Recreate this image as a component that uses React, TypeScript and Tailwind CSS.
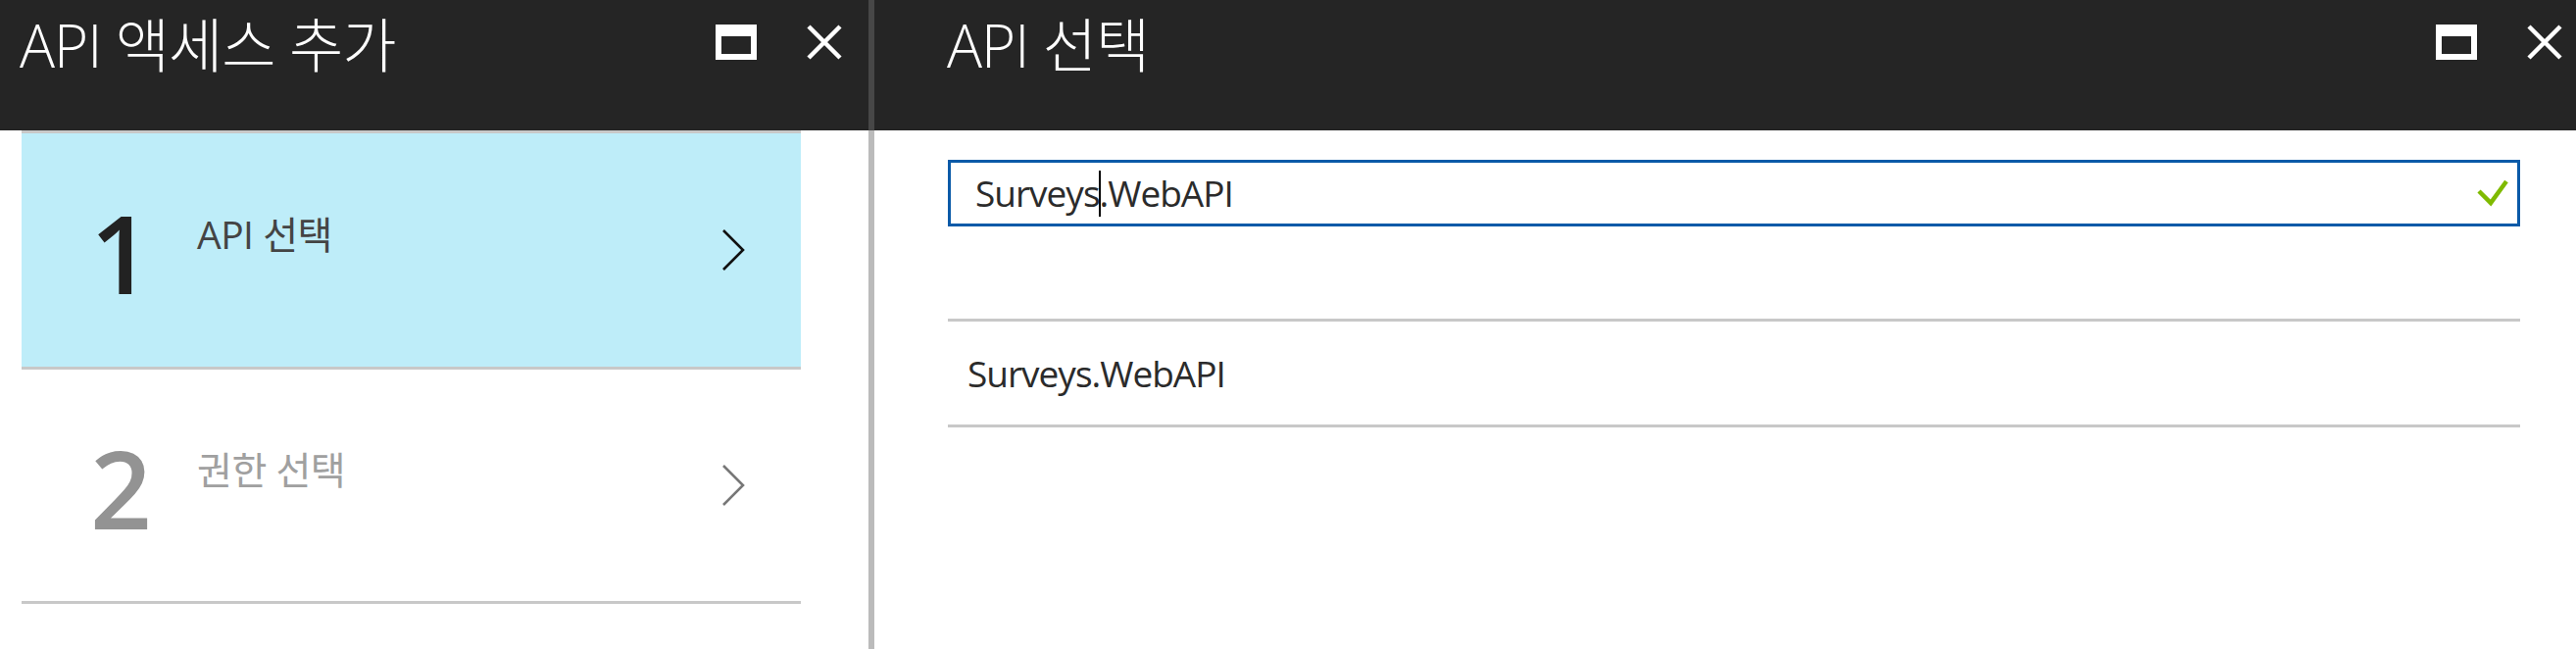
import React from "react"

const font = { fontFamily: '"Open Sans", "Noto Sans CJK KR", sans-serif' }

function MaxIcon() {
  return (
    <svg width="42" height="36" viewBox="0 0 42 36">
      <rect x="0" y="0" width="42" height="36" fill="#ffffff" />
      <rect x="6" y="12" width="30" height="18" fill="#252525" />
    </svg>
  )
}

function CloseIcon() {
  return (
    <svg width="36" height="36" viewBox="0 0 36 36">
      <path d="M2 2 L34 34 M34 2 L2 34" stroke="#ffffff" strokeWidth="4.5" />
    </svg>
  )
}

function Chevron({ color }: { color: string }) {
  return (
    <svg width="24" height="44" viewBox="0 0 24 44">
      <polyline points="2,2 22,22 2,42" fill="none" stroke={color} strokeWidth="2.6" />
    </svg>
  )
}

function Header({ title, right }: { title: string; right: string }) {
  return (
    <div className={`h-[133px] bg-[#252525] flex items-start justify-between ${right}`}>
      <h1 className="text-[60px] leading-[68px] font-light text-white pt-[12px] tracking-[-1px]">
        {title}
      </h1>
      <div className="flex items-center gap-[51px] pt-[25px]">
        <MaxIcon />
        <CloseIcon />
      </div>
    </div>
  )
}

function Step({ n, label, active }: { n: string; label: string; active: boolean }) {
  return (
    <div
      className={`flex items-center border-b-[3px] border-[#c8c8c8] ${
        active ? "bg-[#beedf9] h-[241px]" : "bg-white h-[239px]"
      }`}
    >
      <div className="flex items-start w-[714px] pl-[70px]">
        <div
          className={`text-[110px] leading-[90px] font-semibold w-[109px] pt-[4px] ${
            active ? "text-[#222222]" : "text-[#939393]"
          }`}
        >
          {n}
        </div>
        <div
          className={`text-[39px] leading-[40px] tracking-[-0.5px] pt-[11px] ${
            active ? "text-[#444444]" : "text-[#a0a0a0]"
          }`}
        >
          {label}
        </div>
      </div>
      <Chevron color={active ? "#111111" : "#777777"} />
    </div>
  )
}

export default function App() {
  return (
    <div className="w-[2628px] h-[662px] flex bg-white overflow-hidden" style={font}>
      <div className="w-[886px] flex flex-col">
        <Header title="API 액세스 추가" right="pl-[20px] pr-[27px]" />
        <div className="ml-[22px] w-[795px] border-t-[3px] border-[#c8c8c8]">
          <Step n="1" label="API 선택" active={true} />
          <Step n="2" label="권한 선택" active={false} />
        </div>
      </div>

      <div className="w-[6px] flex flex-col">
        <div className="h-[133px] bg-[#474747]" />
        <div className="flex-1 bg-[#bbbbbb]" />
      </div>

      <div className="flex-1 flex flex-col">
        <Header title="API 선택" right="pl-[74px] pr-[14px]" />
        <div className="pl-[75px] pr-[57px] pt-[30px]">
          <div className="h-[68px] border-[3px] border-[#0a5aa8] flex items-center justify-between pl-[25px] pr-[9px]">
            <div className="text-[37px] text-[#2b2b2b] tracking-[-1px] flex items-center">
              Surveys
              <span className="inline-block w-[2px] h-[47px] bg-black -mx-[1px]" />
              .WebAPI
            </div>
            <svg width="32" height="28" viewBox="0 0 32 28">
              <polyline points="2,12 14,24 30,2" fill="none" stroke="#7fba00" strokeWidth="4.5" />
            </svg>
          </div>
          <div className="mt-[94px] border-t-[3px] border-b-[3px] border-[#c8c8c8] h-[111px] flex items-center pl-[20px]">
            <span className="text-[37px] text-[#2b2b2b] tracking-[-1px]">Surveys.WebAPI</span>
          </div>
        </div>
      </div>
    </div>
  )
}
